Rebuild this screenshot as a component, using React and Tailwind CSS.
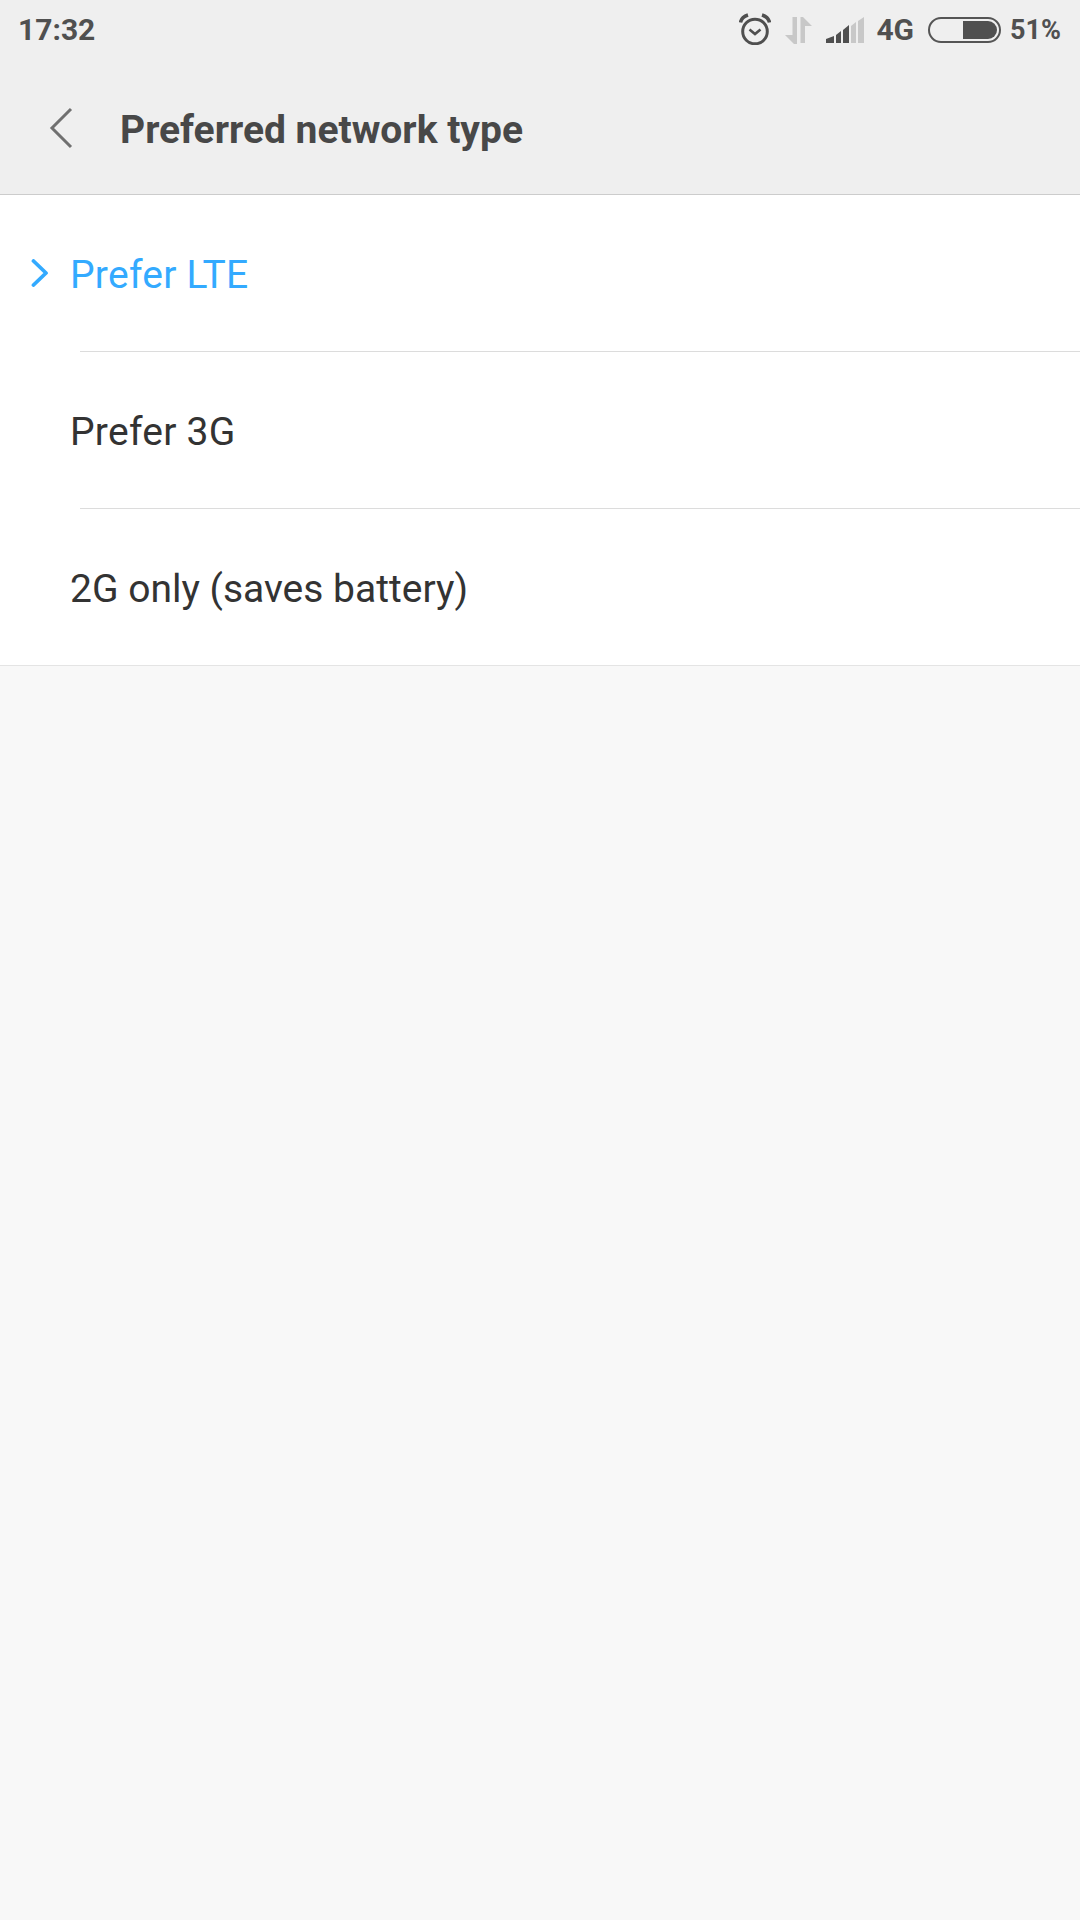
const font = { fontFamily: "Roboto, sans-serif" };

function AlarmIcon() {
  return (
    <svg width="32" height="32" viewBox="0 0 32 32" fill="none" stroke="#4f4f4f">
      <circle cx="16" cy="18.5" r="12.3" strokeWidth="3" />
      <path d="M10.5 16.5 L16 21 L21.5 16.5" strokeWidth="2.6" />
      <path d="M1.5 9.5 Q2.5 4 9 2" strokeWidth="3.6" />
      <path d="M30.5 9.5 Q29.5 4 23 2" strokeWidth="3.6" />
    </svg>
  );
}

function DataArrows() {
  return (
    <svg width="28" height="27" viewBox="0 0 28 27" fill="#c8c8c8">
      <path d="M7.5 0 H12 V27 H9 L0 18 H7.5 Z" />
      <path d="M15.5 0 H18 L27 9 H20 V26 H15.5 Z" />
    </svg>
  );
}

function SignalBars() {
  return (
    <svg width="38" height="26" viewBox="0 0 38 26">
      <path d="M0 26 V22 L8 19 V26 Z" fill="#4f4f4f" />
      <path d="M10 26 V18 L15 14 V26 Z" fill="#4f4f4f" />
      <path d="M17 26 V13 L23 8 V26 Z" fill="#4f4f4f" />
      <path d="M25 26 V9 L30 5 V26 Z" fill="#c8c8c8" />
      <path d="M32 26 V4 L38 0 V26 Z" fill="#c8c8c8" />
    </svg>
  );
}

function Battery() {
  return (
    <div className="flex h-[26px] w-[73px] items-center justify-end rounded-full border-2 border-[#555555] p-[2px]">
      <div className="h-[18px] w-[34px] rounded-r-full bg-[#505050]" />
    </div>
  );
}

function Row({ label, active, last }) {
  return (
    <div className={last ? "border-b border-[#e4e4e4]" : ""}>
      <div className="relative flex h-[156px] items-center pl-[70px] pt-[4px]">
        {active && (
          <svg className="absolute left-[31px] top-[64px]" width="18" height="28" viewBox="0 0 18 28" fill="none" stroke="#33aaff" strokeWidth="3.8" strokeLinecap="round" strokeLinejoin="round">
            <path d="M2.5 2 L15 14 L2.5 26" />
          </svg>
        )}
        <span className={`text-[39px] leading-none ${last ? "" : "tracking-[0.25px]"} ${active ? "text-[#33aaff]" : "text-[#333333]"}`}>{label}</span>
      </div>
      {!last && <div className="ml-[80px] h-px bg-[#dcdcdc]" />}
    </div>
  );
}

export default function App() {
  return (
    <div className="flex h-[1920px] w-[1080px] flex-col bg-[#f8f8f8]" style={font}>
      <div className="h-[195px] border-b border-[#cccccc] bg-[#efefef]">
        {/* status bar */}
        <div className="flex h-[60px] items-center justify-between pl-[18px] pr-[19px]">
          <span className="text-[30px] font-bold leading-none text-[#505050]">17:32</span>
          <div className="flex items-center">
            <div className="-mt-[2px]"><AlarmIcon /></div>
            <div className="ml-[14px]"><DataArrows /></div>
            <div className="ml-[13px]"><SignalBars /></div>
            <span className="ml-[12px] text-[30px] font-bold leading-none text-[#505050]">4G</span>
            <div className="ml-[14px]"><Battery /></div>
            <span className="ml-[9px] text-[27px] font-bold leading-none text-[#505050]">51%</span>
          </div>
        </div>
        {/* title */}
        <div className="flex h-[134px] items-center pl-[49px] pt-[6px]">
          <svg className="-mt-[5px]" width="24" height="42" viewBox="0 0 24 42" fill="none" stroke="#707070" strokeWidth="3">
            <path d="M22 2 L3 21 L22 40" />
          </svg>
          <span className="ml-[47px] text-[39px] font-bold leading-none text-[#484848]">Preferred network type</span>
        </div>
      </div>
      <div className="bg-white">
        <Row label="Prefer LTE" active />
        <Row label="Prefer 3G" />
        <Row label="2G only (saves battery)" last />
      </div>
    </div>
  );
}
